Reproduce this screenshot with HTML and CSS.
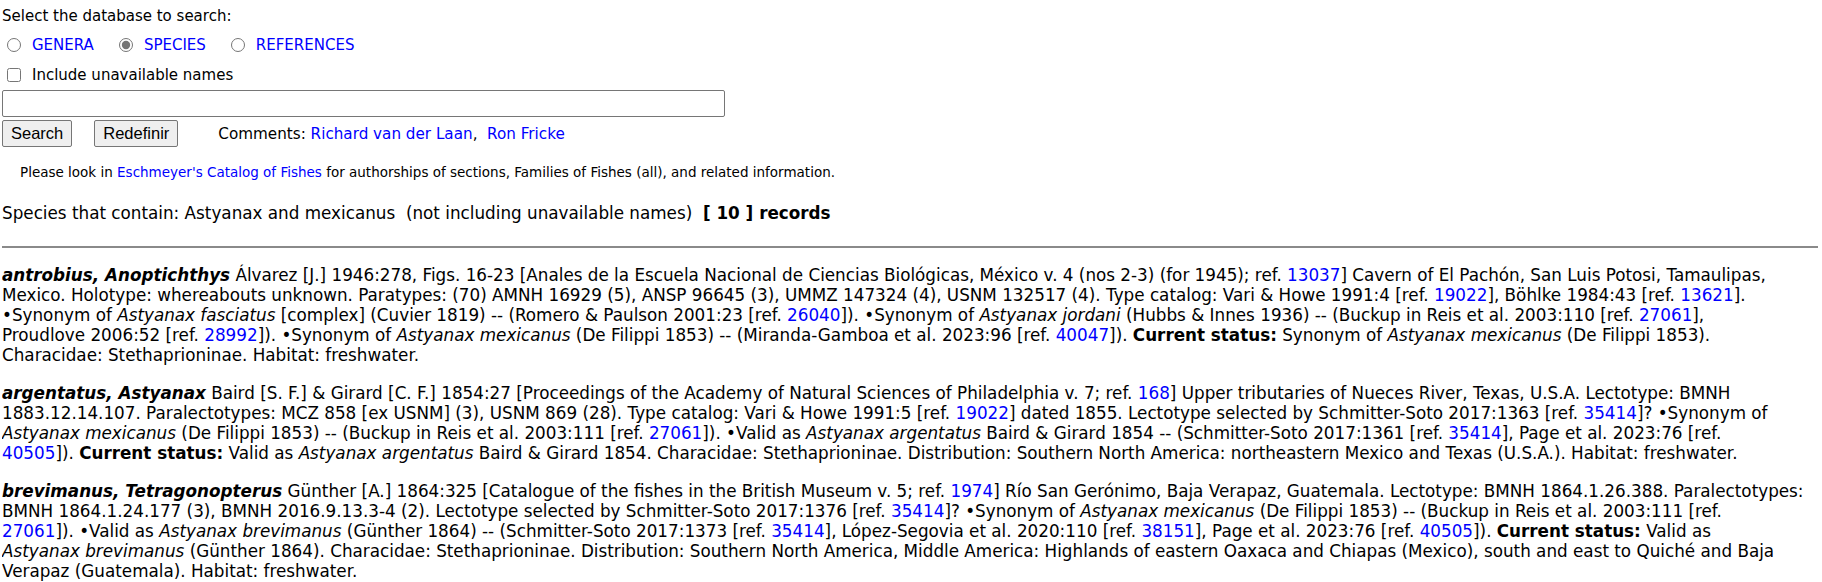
FILE: index.html
```html
<!DOCTYPE html>
<html>
<head>
<meta charset="utf-8">
<title>Species search</title>
<link rel="stylesheet" href="styles.css">
</head>
<body>
<form class="search-form">
  <div class="prompt">Select the database to search:</div>
  <div class="db-row">
    <label class="db-opt"><input type="radio" name="db"><a href="#" class="lnk">GENERA</a></label>
    <label class="db-opt"><input type="radio" name="db" checked><a href="#" class="lnk">SPECIES</a></label>
    <label class="db-opt"><input type="radio" name="db"><a href="#" class="lnk">REFERENCES</a></label>
  </div>
  <label class="unavail"><input type="checkbox">Include unavailable names</label>
  <input type="text" class="query">
  <div class="btn-row">
    <button type="button" class="btn">Search</button>
    <button type="reset" class="btn">Redefinir</button>
    <span class="comments">Comments: <a href="#" class="lnk">Richard van der Laan</a>,&nbsp; <a href="#" class="lnk">Ron Fricke</a></span>
  </div>
</form>
<p class="note">Please look in <a href="#" class="lnk">Eschmeyer's Catalog of Fishes</a> for authorships of sections, Families of Fishes (all), and related information.</p>
<p class="summary">Species that contain: Astyanax and mexicanus&nbsp; (not including unavailable names)&nbsp; <b>[ 10 ] records</b></p>
<hr class="sep">
<div class="results">
<p class="entry"><b><i>antrobius, Anoptichthys</i></b> Álvarez [J.] 1946:278, Figs. 16-23 [Anales de la Escuela Nacional de Ciencias Biológicas, México v. 4 (nos 2-3) (for 1945); ref. <a href="#" class="lnk">13037</a>] Cavern of El Pachón, San Luis Potosi, Tamaulipas,<br>Mexico. Holotype: whereabouts unknown. Paratypes: (70) AMNH 16929 (5), ANSP 96645 (3), UMMZ 147324 (4), USNM 132517 (4). Type catalog: Vari &amp; Howe 1991:4 [ref. <a href="#" class="lnk">19022</a>], Böhlke 1984:43 [ref. <a href="#" class="lnk">13621</a>].<br>•Synonym of <i>Astyanax fasciatus</i> [complex] (Cuvier 1819) -- (Romero &amp; Paulson 2001:23 [ref. <a href="#" class="lnk">26040</a>]). •Synonym of <i>Astyanax jordani</i> (Hubbs &amp; Innes 1936) -- (Buckup in Reis et al. 2003:110 [ref. <a href="#" class="lnk">27061</a>],<br>Proudlove 2006:52 [ref. <a href="#" class="lnk">28992</a>]). •Synonym of <i>Astyanax mexicanus</i> (De Filippi 1853) -- (Miranda-Gamboa et al. 2023:96 [ref. <a href="#" class="lnk">40047</a>]). <b>Current status:</b> Synonym of <i>Astyanax mexicanus</i> (De Filippi 1853).<br>Characidae: Stethaprioninae. Habitat: freshwater.</p>
<p class="entry"><b><i>argentatus, Astyanax</i></b> Baird [S. F.] &amp; Girard [C. F.] 1854:27 [Proceedings of the Academy of Natural Sciences of Philadelphia v. 7; ref. <a href="#" class="lnk">168</a>] Upper tributaries of Nueces River, Texas, U.S.A. Lectotype: BMNH<br>1883.12.14.107. Paralectotypes: MCZ 858 [ex USNM] (3), USNM 869 (28). Type catalog: Vari &amp; Howe 1991:5 [ref. <a href="#" class="lnk">19022</a>] dated 1855. Lectotype selected by Schmitter-Soto 2017:1363 [ref. <a href="#" class="lnk">35414</a>]? •Synonym of<br><i>Astyanax mexicanus</i> (De Filippi 1853) -- (Buckup in Reis et al. 2003:111 [ref. <a href="#" class="lnk">27061</a>]). •Valid as <i>Astyanax argentatus</i> Baird &amp; Girard 1854 -- (Schmitter-Soto 2017:1361 [ref. <a href="#" class="lnk">35414</a>], Page et al. 2023:76 [ref.<br><a href="#" class="lnk">40505</a>]). <b>Current status:</b> Valid as <i>Astyanax argentatus</i> Baird &amp; Girard 1854. Characidae: Stethaprioninae. Distribution: Southern North America: northeastern Mexico and Texas (U.S.A.). Habitat: freshwater.</p>
<p class="entry"><b><i>brevimanus, Tetragonopterus</i></b> Günther [A.] 1864:325 [Catalogue of the fishes in the British Museum v. 5; ref. <a href="#" class="lnk">1974</a>] Río San Gerónimo, Baja Verapaz, Guatemala. Lectotype: BMNH 1864.1.26.388. Paralectotypes:<br>BMNH 1864.1.24.177 (3), BMNH 2016.9.13.3-4 (2). Lectotype selected by Schmitter-Soto 2017:1376 [ref. <a href="#" class="lnk">35414</a>]? •Synonym of <i>Astyanax mexicanus</i> (De Filippi 1853) -- (Buckup in Reis et al. 2003:111 [ref.<br><a href="#" class="lnk">27061</a>]). •Valid as <i>Astyanax brevimanus</i> (Günther 1864) -- (Schmitter-Soto 2017:1373 [ref. <a href="#" class="lnk">35414</a>], López-Segovia et al. 2020:110 [ref. <a href="#" class="lnk">38151</a>], Page et al. 2023:76 [ref. <a href="#" class="lnk">40505</a>]). <b>Current status:</b> Valid as<br><i>Astyanax brevimanus</i> (Günther 1864). Characidae: Stethaprioninae. Distribution: Southern North America, Middle America: Highlands of eastern Oaxaca and Chiapas (Mexico), south and east to Quiché and Baja<br>Verapaz (Guatemala). Habitat: freshwater.</p>
</div>
</body>
</html>
```

FILE: styles.css
```css
body {
  margin: 0 4px 0 2px;
  font-family: "DejaVu Sans", Verdana, sans-serif;
  color: #000;
  background: #fff;
}
.lnk { color: #0000ff; text-decoration: none; }
.search-form { margin: 0; font-size: 15px; }
.prompt { padding-top: 7px; line-height: 18px; }
.db-row { display: flex; align-items: center; height: 20px; margin-top: 10px; line-height: 20px; }
.db-opt { display: flex; align-items: center; margin-right: 20px; }
.db-opt input { margin: 0 11px 0 5px; width: 14px; height: 14px; accent-color: #757575; }
.unavail { display: flex; align-items: center; height: 20px; margin-top: 10px; line-height: 20px; }
.unavail input { margin: 0 11px 0 5px; width: 14px; height: 14px; }
.query { display: block; margin-top: 5px; width: 723px; height: 27px; box-sizing: border-box; border: 1px solid #767676; border-radius: 2px; padding: 1px 2px; }
.btn-row { display: flex; align-items: center; margin-top: 3px; height: 27px; }
.btn { font-family: "Liberation Sans", Arial, sans-serif; font-size: 16.5px; height: 27px; padding: 0 8px; border: 1px solid #767676; border-radius: 2px; background: #efefef; color: #000; }
.btn + .btn { margin-left: 22px; }
.comments { margin-left: 40px; font-size: 15.2px; }
.note { margin: 17px 0 0 18px; font-size: 13.5px; line-height: 16px; }
.summary { margin: 23px 0 0 0; font-size: 16.8px; line-height: 20px; }
.sep { margin: 23px 0 0 0; border: 0; border-top: 2px solid #8a8a8a; }
.results { margin-top: 17px; }
.entry { margin: 0 0 18px 0; font-size: 16.8px; line-height: 20px; white-space: nowrap; }
```
